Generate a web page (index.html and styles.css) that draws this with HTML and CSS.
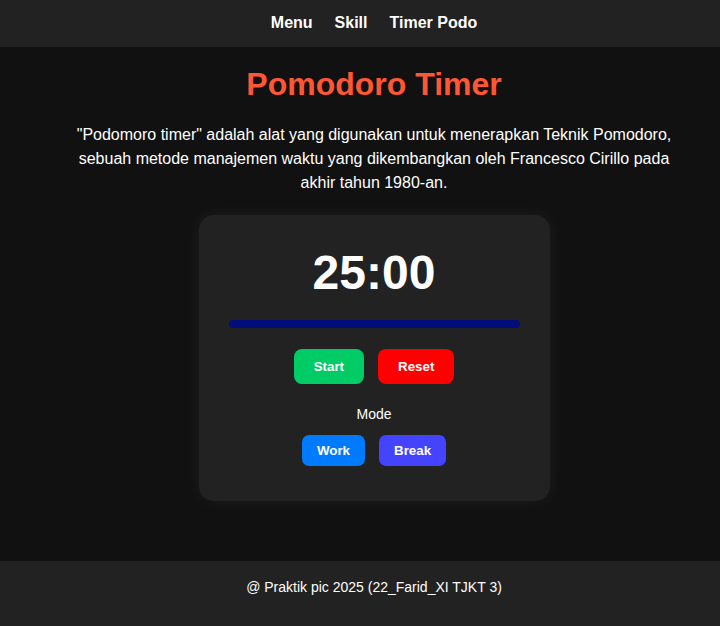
FILE: index.html
```html
<!DOCTYPE html>
<html lang="id">
<head>
<meta charset="UTF-8">
<title>Pomodoro Timer</title>
<link rel="stylesheet" href="styles.css">
</head>
<body>
<header class="site-header">
  <nav class="nav">
    <a class="nav-link" href="#">Menu</a>
    <a class="nav-link" href="#">Skill</a>
    <a class="nav-link" href="#">Timer Podo</a>
  </nav>
</header>
<main class="main">
  <h1 class="title">Pomodoro Timer</h1>
  <p class="intro">"Podomoro timer" adalah alat yang digunakan untuk menerapkan Teknik Pomodoro, sebuah metode manajemen waktu yang dikembangkan oleh Francesco Cirillo pada akhir tahun 1980-an.</p>
  <section class="card">
    <div class="time">25:00</div>
    <div class="progress"><div class="progress-fill"></div></div>
    <div class="controls">
      <button class="btn btn-start">Start</button>
      <button class="btn btn-reset">Reset</button>
    </div>
    <div class="mode-label">Mode</div>
    <div class="modes">
      <button class="mode-btn mode-work">Work</button>
      <button class="mode-btn mode-break">Break</button>
    </div>
  </section>
</main>
<footer class="site-footer">
  <p class="footer-text">@ Praktik pic 2025 (22_Farid_XI TJKT 3)</p>
</footer>
</body>
</html>
```
FILE: styles.css
```css
* { box-sizing: border-box; }
html, body { margin: 0; padding: 0; }
body {
  background: #111111;
  color: #ffffff;
  font-family: "Liberation Sans", Arial, sans-serif;
  overflow-x: hidden;
}
.site-header {
  background: #222222;
  padding: 13px 0 15px 28px;
}
.nav {
  display: flex;
  justify-content: center;
  gap: 22px;
  line-height: 19px;
}
.nav-link {
  color: #ffffff;
  text-decoration: none;
  font-weight: bold;
  font-size: 16px;
}
.main {
  padding: 19px 0 14px 28px;
  text-align: center;
}
.title {
  margin: 0 0 20px;
  font-size: 32px;
  line-height: 37px;
  color: #ff5733;
  font-weight: bold;
}
.intro {
  max-width: 600px;
  margin: 0 auto;
  font-size: 16px;
  line-height: 24px;
}
.card {
  width: 351px;
  margin: 20px auto 46px;
  padding: 30px 30px 35px;
  background: #222222;
  border-radius: 15px;
  box-shadow: 0 0 16px rgba(255, 255, 255, 0.06);
}
.time {
  font-size: 48px;
  font-weight: bold;
  line-height: 55px;
}
.progress {
  margin-top: 20px;
  height: 8px;
  border-radius: 4px;
  background: #333333;
  overflow: hidden;
}
.progress-fill {
  width: 100%;
  height: 100%;
  background: #000d7a;
}
.controls, .modes {
  display: flex;
  justify-content: center;
  gap: 14px;
}
.controls { margin-top: 21px; }
.btn, .mode-btn {
  border: none;
  color: #ffffff;
  font-family: "Liberation Sans", Arial, sans-serif;
  font-weight: bold;
  font-size: 13.333px;
  line-height: 15px;
  cursor: pointer;
}
.btn {
  padding: 10px 20px;
  border-radius: 8px;
}
.btn-start { background: #00cc66; }
.btn-reset { background: #ff0000; }
.mode-label {
  margin-top: 22px;
  font-size: 14px;
  line-height: 16px;
}
.modes { margin-top: 13px; }
.mode-btn {
  padding: 8px 15px;
  border-radius: 7px;
}
.mode-work { background: #007bff; }
.mode-break { background: #4444ff; }
.site-footer {
  background: #222222;
  padding: 18px 0 40px 28px;
  text-align: center;
}
.footer-text {
  margin: 0;
  font-size: 14px;
  line-height: 16px;
}
```
